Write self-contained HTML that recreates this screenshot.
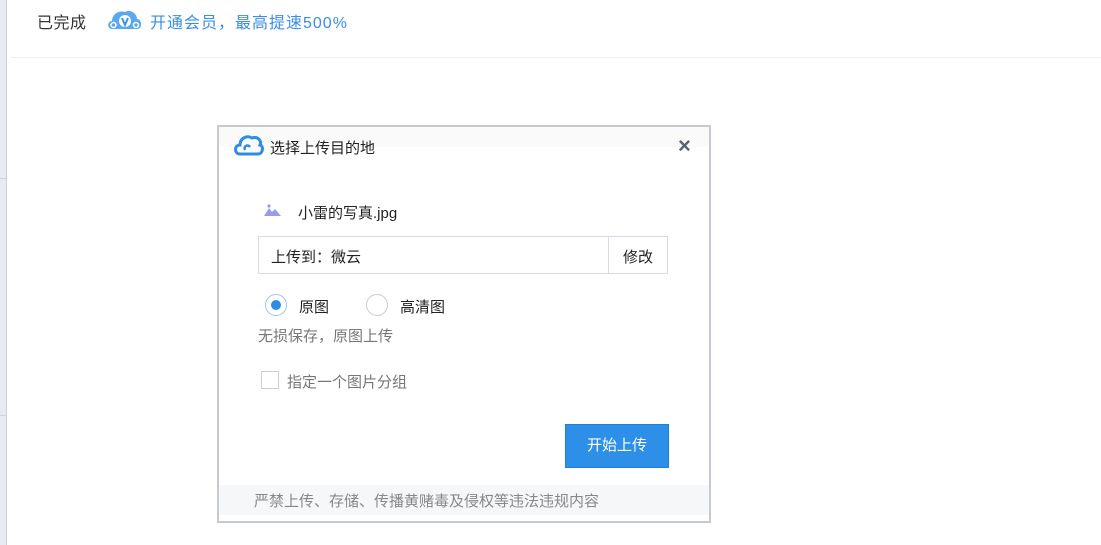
<!DOCTYPE html>
<html><head><meta charset="utf-8"><style>
*{margin:0;padding:0;box-sizing:border-box}
body{width:1101px;height:545px;background:#fff;position:relative;overflow:hidden;font-family:"Liberation Sans","Noto Sans CJK SC",sans-serif;font-size:14px;color:#222}
.a{position:absolute}
</style></head><body>
<div class="a" style="left:0;top:0;width:7px;height:545px;background:#e8ebf5;border-right:1px solid #cbcdd8"></div>
<div class="a" style="left:0;top:178px;width:7px;height:1px;background:#d0d3de"></div>
<div class="a" style="left:0;top:415px;width:7px;height:1px;background:#d0d3de"></div>
<div class="a" style="left:11px;top:57px;width:1090px;height:1px;background:#eceef2"></div>
<div class="a" style="left:37px;top:9px;font-size:16px;color:#333;letter-spacing:0.5px">已完成</div>
<svg class="a" style="left:106px;top:8px" width="38" height="24" viewBox="0 0 38 24"><path d="M6 21 C1 21 1 13 6 13 C6 6 13 2 19 4 C24 1 31 5 31 11 C36 11 37 21 31 21 Z" fill="#5aa9ee"/><circle cx="19" cy="13" r="6" fill="#fff"/><path d="M16 10 L19 17 L22 10" stroke="#3f93e0" stroke-width="2" fill="none"/><circle cx="7.5" cy="17" r="2.5" fill="none" stroke="#fff" stroke-width="1.5"/><circle cx="30" cy="17" r="2.5" fill="none" stroke="#fff" stroke-width="1.5"/></svg>
<div class="a" style="left:150px;top:9px;font-size:16px;color:#3a8ee6;letter-spacing:1px">开通会员，最高提速500%</div>

<div class="a" style="left:217px;top:125px;width:494px;height:398px;border:2px solid #c6c9d1;background:#fff"></div>
<div class="a" style="left:219px;top:127px;width:490px;height:20px;background:#fafafb"></div>
<svg class="a" style="left:232px;top:133px" width="32" height="24" viewBox="0 0 32 24"><path d="M8 21 C2 21 2 12 8 12 C8 5 15 2 20 5 C26 3 30 8 28 12 C32 13 31 21 26 21 Z" fill="none" stroke="#2e8be6" stroke-width="3"/><path d="M13 17 C11 13 16 11 18 14" stroke="#2e8be6" stroke-width="2.5" fill="none"/></svg>
<div class="a" style="left:270px;top:137px;font-size:15px;color:#222">选择上传目的地</div>
<div class="a" style="left:678px;top:134px;font-size:22px;color:#5c6370;font-weight:bold;line-height:24px">×</div>
<svg class="a" style="left:264px;top:204px" width="18" height="12" viewBox="0 0 18 12"><path d="M0 12 L5 4 L8 8 L11 5 L17 12 Z" fill="#9a99ee"/><circle cx="5" cy="2" r="1.6" fill="#9a99ee"/></svg>
<div class="a" style="left:298px;top:202px;font-size:15px">小雷的写真.jpg</div>
<div class="a" style="left:258px;top:236px;width:410px;height:38px;border:1px solid #d8dbe3"></div>
<div class="a" style="left:608px;top:236px;width:1px;height:38px;background:#d8dbe3"></div>
<div class="a" style="left:271px;top:246px;font-size:15px">上传到：微云</div>
<div class="a" style="left:623px;top:246px;font-size:15px">修改</div>
<div class="a" style="left:265px;top:294px;width:22px;height:22px;border-radius:50%;border:1px solid #9cc3ef;background:#fff"></div>
<div class="a" style="left:271px;top:300px;width:10px;height:10px;border-radius:50%;background:#2e8be6"></div>
<div class="a" style="left:299px;top:296px;font-size:15px">原图</div>
<div class="a" style="left:366px;top:294px;width:22px;height:22px;border-radius:50%;border:1px solid #c8ccd5"></div>
<div class="a" style="left:400px;top:296px;font-size:15px">高清图</div>
<div class="a" style="left:258px;top:325px;font-size:15px;color:#777">无损保存，原图上传</div>
<div class="a" style="left:261px;top:371px;width:18px;height:18px;border:1px solid #c8ccd5"></div>
<div class="a" style="left:287px;top:371px;font-size:15px;color:#777">指定一个图片分组</div>
<div class="a" style="left:565px;top:424px;width:104px;height:44px;background:#2e8fe9;border:1px solid #1f7fd8;color:#fff;font-size:15px;text-align:center;line-height:42px">开始上传</div>
<div class="a" style="left:219px;top:485px;width:490px;height:30px;background:#f6f7f8"></div>
<div class="a" style="left:254px;top:490px;font-size:15px;color:#888">严禁上传、存储、传播黄赌毒及侵权等违法违规内容</div>
</body></html>
